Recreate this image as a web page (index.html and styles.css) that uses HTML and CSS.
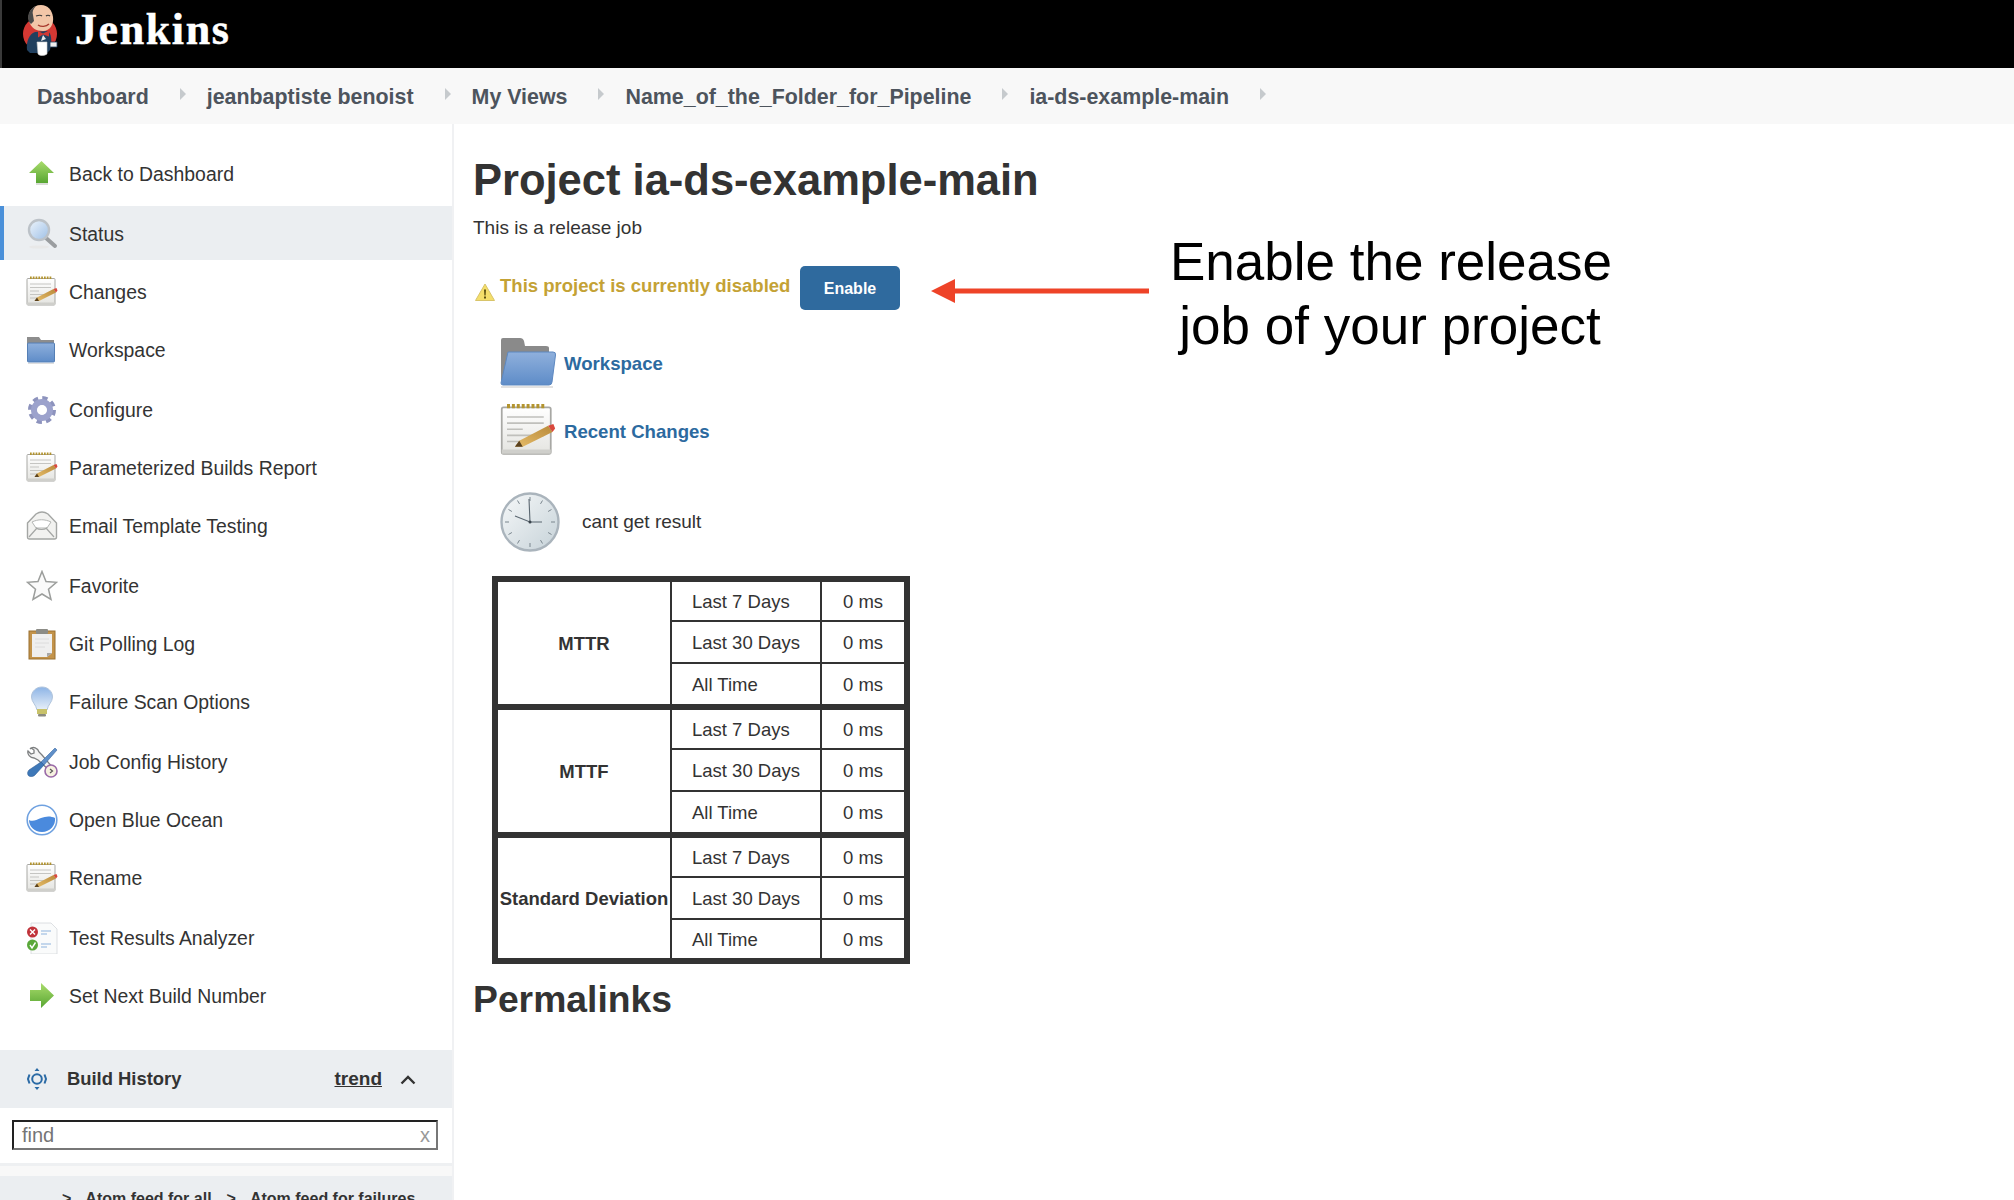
FILE: index.html
```html
<!DOCTYPE html>
<html lang="en">
<head>
  <meta charset="UTF-8" />
  <title>ia-ds-example-main [Jenkins]</title>
  <link rel="stylesheet" href="styles.css">
</head>
<body>
  <svg class="defs" width="0" height="0">
    <defs>
      <linearGradient id="g-green" x1="0" y1="0" x2="0" y2="1"><stop offset="0" stop-color="#a9dc6c"/><stop offset="1" stop-color="#58a632"/></linearGradient>
      <linearGradient id="g-lens" x1="0" y1="0" x2="1" y2="1"><stop offset="0" stop-color="#eef5fc"/><stop offset="1" stop-color="#9dbfe6"/></linearGradient>
      <linearGradient id="g-folder" x1="0" y1="0" x2="0" y2="1"><stop offset="0" stop-color="#8fb0dc"/><stop offset="1" stop-color="#5e8cc8"/></linearGradient>
      <linearGradient id="g-paper" x1="0" y1="0" x2="0" y2="1"><stop offset="0" stop-color="#ffffff"/><stop offset="1" stop-color="#e4e4e0"/></linearGradient>
      <linearGradient id="g-bulb" x1="0" y1="0" x2="0" y2="1"><stop offset="0" stop-color="#8db4e6"/><stop offset="1" stop-color="#e8f0f8"/></linearGradient>
      <linearGradient id="g-clock" x1="0" y1="0" x2="1" y2="1"><stop offset="0" stop-color="#f6f8f9"/><stop offset="1" stop-color="#c6d2d8"/></linearGradient>
      <linearGradient id="g-pencil" x1="0" y1="1" x2="1" y2="0"><stop offset="0" stop-color="#e6bd6a"/><stop offset="1" stop-color="#b98a3a"/></linearGradient>

      <symbol id="ic-up" viewBox="0 0 32 32"><path d="M15.5 3 28 15h-6v10H10V15H3z" fill="url(#g-green)"/><path d="M10 25h12v2H10z" fill="#d9dcd6"/></symbol>
      <symbol id="ic-search" viewBox="0 0 32 32"><path d="M20 20l9 8" stroke="#9a9da0" stroke-width="4" stroke-linecap="round"/><circle cx="13" cy="12" r="10" fill="url(#g-lens)" stroke="#bcc2c8" stroke-width="2.4"/><ellipse cx="13" cy="29" rx="10" ry="1.6" fill="#e8e8e8"/></symbol>
      <symbol id="ic-notepad" viewBox="0 0 32 32">
        <rect x="1" y="2.500" width="28" height="26.500" rx="1" fill="url(#g-paper)" stroke="#a8a8a4"/>
        <path d="M4 1.800h22" stroke="#b3942f" stroke-width="2.400" stroke-dasharray="1.700 1.100"/>
        <path d="M4 8h21M4 11.500h21M4 15h9M4 18.500h21M4 22h8" stroke="#c0c0bc" stroke-width=".9"/>
        <path d="M1 26.500h28v2.500H1z" fill="#cfcfcb"/>
        <path d="M8.500 25 11 21.500 27.500 13 30 16.500 13 25z" fill="url(#g-pencil)"/>
        <path d="M27.500 13 30.500 12 31.500 14.500 30 16.500z" fill="#d9483c"/>
        <path d="M8.500 25 11 21.500 13 25z" fill="#5a4220"/>
      </symbol>
      <symbol id="ic-folder" viewBox="0 0 32 32"><path d="M1 3h12l2 3h13v6H1z" fill="#8d8d8d"/><rect x="1.500" y="9" width="27" height="19" rx="1" fill="url(#g-folder)" stroke="#557fb5"/><path d="M2 29h26v1H2z" fill="#dedede"/></symbol>
      <symbol id="ic-gear" viewBox="0 0 32 32"><circle cx="16" cy="16" r="11.500" fill="none" stroke="#8d93bd" stroke-width="5" stroke-dasharray="5.020 4"/><circle cx="16" cy="16" r="8" fill="none" stroke="#9ca2cc" stroke-width="6"/><circle cx="16" cy="16" r="4.500" fill="#fff"/></symbol>
      <symbol id="ic-mail" viewBox="0 0 32 32"><path d="M1.500 13 10 4q6-4 12 0l8.500 9v14q0 2-2 2h-25q-2 0-2-2z" fill="#f2f2f0" stroke="#a4a6a4" stroke-width="1.400"/><path d="M6 12c6-3 13-3 19 0l-4 6H10z" fill="#fff" stroke="#b4b6b4"/><path d="M3 27l8-9M28 27l-8-9M10 18c3 2 8 2 11 0" stroke="#a4a6a4" stroke-width="1.200" fill="none"/></symbol>
      <symbol id="ic-star" viewBox="0 0 32 32"><path d="M16 1.500 20 11.500l10.500.8-8 6.900 2.500 10.300L16 24l-9 5.500 2.500-10.300-8-6.900L12 11.500z" fill="#fafafa" stroke="#9c9e9c" stroke-width="1.500"/></symbol>
      <symbol id="ic-clip" viewBox="0 0 32 32"><rect x="3" y="3" width="26" height="28" fill="#c3934a" stroke="#9a7030"/><path d="M6 6h20v19l-5 4H6z" fill="#efefef"/><path d="M21 29v-4h5z" fill="#a8a8a8"/><rect x="10" y="1" width="12" height="5" rx="1" fill="#8c8c86"/><path d="M9 11h14M9 15h14M9 19h10" stroke="#dcdcdc"/></symbol>
      <symbol id="ic-bulb" viewBox="0 0 32 32"><path d="M16 1c6 0 10.500 4.500 10.500 10 0 5-4.500 7.500-5.500 13h-10C10 18.500 5.500 16 5.500 11 5.500 5.500 10 1 16 1z" fill="url(#g-bulb)" stroke="#b0c4dc"/><rect x="11" y="23" width="10" height="5" fill="#c8c26a"/><rect x="12" y="28" width="8" height="2.500" rx="1" fill="#8a8a80"/></symbol>
      <symbol id="ic-tools" viewBox="0 0 32 32"><path d="M4 3c3-3 8-1 9 3l3 3 11 13-3 3L12 14 8 12C4 12 1 8 2 5l3 3 3-1 0-3-3-2z" fill="#f4f4f4" stroke="#7d7f80" stroke-width="1.300"/><path d="M29 2 31 4 18 19 15 16z" fill="#5f8fc8" stroke="#3a6aa5" stroke-width=".6"/><path d="M15 16l3 3-9 10c-2 2-6 2-7 0s0-4 1-5z" fill="#3e78b8" stroke="#2d5c96" stroke-width=".6"/><circle cx="25" cy="25" r="6" fill="#f6f1e0" stroke="#9a6aa8" stroke-width="1.600"/><path d="M24 23l2.500 2-2.500 2" fill="none" stroke="#555" stroke-width="1.200"/></symbol>
      <symbol id="ic-ocean" viewBox="0 0 32 32"><circle cx="16" cy="16" r="14.800" fill="#fff" stroke="#6fa1e0" stroke-width="1.600"/><path d="M3 16c4 2 7 0 12-2s10-2 14 0c1 7-5 14-13 14S3 22 3 16z" fill="#4a8add"/></symbol>
      <symbol id="ic-tests" viewBox="0 0 32 32"><path d="M5 1h20l6 6v25H5z" fill="#fafbfb" stroke="#d4d8dc" stroke-width=".8"/><path d="M15 9h10M15 12h6M15 22h10M15 25h6" stroke="#8eb4de" stroke-width="1.200"/><circle cx="6.500" cy="10" r="5.500" fill="#c0333a"/><path d="M4 7.500l5 5M9 7.500l-5 5" stroke="#fff" stroke-width="1.400"/><circle cx="6.500" cy="23" r="5.500" fill="#5aa83a"/><path d="M4 23l2 3 3.500-5.500" stroke="#fff" stroke-width="1.400" fill="none"/></symbol>
      <symbol id="ic-next" viewBox="0 0 32 32"><path d="M4 10h11V3l13 12.500L15 28v-7H4z" fill="url(#g-green)"/></symbol>
    </defs>
  </svg>

  <header class="topbar">
    <svg class="logo" viewBox="22 5 36 51" aria-hidden="true">
      <circle cx="40" cy="34" r="17" fill="#d33833"/>
      <path d="M27 50c-1-8 2-16 8-18l12-1c5 2 5 10 3 19l-3 3H30z" fill="#21405f"/>
      <path d="M29 21c-2-8 3-16 12-16 7 0 11 5 12 12 1 7-3 14-10 14-7 0-12-3-14-10z" fill="#f2c6a8"/>
      <path d="M29 22c-3-8 2-14 7-16-3 3-4 6-3 9l1 6-3 3z" fill="#4b4b4b"/>
      <path d="M36 16c3-1 5-1 6 0M46 16c1-1 3-1 4 0" stroke="#3a3a3a" stroke-width="1.200" fill="none"/>
      <path d="M38 25c3 2 8 2 11-1" stroke="#a83a2e" stroke-width="1.400" fill="none"/>
      <path d="M38 31l5 2.500 6-3v6l-6-2-5 3z" fill="#d33833"/>
      <path d="M43 35l-2 6 5-2z" fill="#e8e8e8"/>
      <path d="M37 42h10v12c-3 2-7 2-9 0z" fill="#fff" stroke="#cfcfcf" stroke-width=".6"/>
      <path d="M50 42h7v5h-7z" fill="#eee" stroke="#21405f" stroke-width=".8"/>
    </svg>
    <span class="wordmark">Jenkins</span>
  </header>

  <nav class="breadcrumbs">
    <a href="#">Dashboard</a><i class="sep"></i>
    <a href="#">jeanbaptiste benoist</a><i class="sep"></i>
    <a href="#">My Views</a><i class="sep"></i>
    <a href="#">Name_of_the_Folder_for_Pipeline</a><i class="sep"></i>
    <a href="#">ia-ds-example-main</a><i class="sep"></i>
  </nav>

  <div class="layout">
    <aside class="sidebar">
      <ul class="tasks">
        <li><svg class="task-icon"><use href="#ic-up"/></svg>Back to Dashboard</li>
        <li class="active"><svg class="task-icon"><use href="#ic-search"/></svg>Status</li>
        <li><svg class="task-icon"><use href="#ic-notepad"/></svg>Changes</li>
        <li><svg class="task-icon"><use href="#ic-folder"/></svg>Workspace</li>
        <li><svg class="task-icon"><use href="#ic-gear"/></svg>Configure</li>
        <li><svg class="task-icon"><use href="#ic-notepad"/></svg>Parameterized Builds Report</li>
        <li><svg class="task-icon"><use href="#ic-mail"/></svg>Email Template Testing</li>
        <li><svg class="task-icon"><use href="#ic-star"/></svg>Favorite</li>
        <li><svg class="task-icon"><use href="#ic-clip"/></svg>Git Polling Log</li>
        <li><svg class="task-icon"><use href="#ic-bulb"/></svg>Failure Scan Options</li>
        <li><svg class="task-icon"><use href="#ic-tools"/></svg>Job Config History</li>
        <li><svg class="task-icon"><use href="#ic-ocean"/></svg>Open Blue Ocean</li>
        <li><svg class="task-icon"><use href="#ic-notepad"/></svg>Rename</li>
        <li><svg class="task-icon"><use href="#ic-tests"/></svg>Test Results Analyzer</li>
        <li><svg class="task-icon"><use href="#ic-next"/></svg>Set Next Build Number</li>
      </ul>

      <div class="history-head">
        <svg class="history-icon" viewBox="0 0 20 24">
          <circle cx="10" cy="12" r="4.800" fill="none" stroke="#2a6aa5" stroke-width="2"/>
          <path d="M10 1l2.500 3h-5zM10 23l2.500-3h-5z" fill="#2a6aa5"/>
          <path d="M2.500 7.500 1 12l1.500 4.500M17.500 7.500 19 12l-1.500 4.500" fill="none" stroke="#2a6aa5" stroke-width="2"/>
        </svg>
        <span class="history-title">Build History</span>
        <a class="trend" href="#">trend</a>
        <svg class="collapse" viewBox="0 0 16 10"><path d="M1.500 8.500 8 2l6.500 6.500" fill="none" stroke="#333" stroke-width="2.400"/></svg>
      </div>
      <div class="history-search">
        <div class="find-box"><span>find</span><span class="clear">x</span></div>
      </div>
      <div class="history-strip"></div>
      <div class="feeds">
        <span class="feed-arrow">&gt;</span><a href="#">Atom feed for all</a>
        <span class="feed-arrow">&gt;</span><a href="#">Atom feed for failures</a>
      </div>
    </aside>

    <main class="content">
      <h1>Project ia-ds-example-main</h1>
      <p class="description">This is a release job</p>

      <form class="disabled-row">
        <svg class="warn-icon" viewBox="0 0 20 18"><path d="M10 1 19.500 17.500H.5z" fill="#f4de6a" stroke="#d8c46a"/><path d="M9 6.500h2l-.4 6h-1.200zM9 13.500h2v2H9z" fill="#5a4e10"/></svg>
        <span class="warn-text">This project is currently disabled</span>
        <button class="btn-enable" type="button">Enable</button>
      </form>

      <div class="link-row">
        <svg class="big-icon" viewBox="0 0 56 50">
          <path d="M1 2q0-2 2-2h17q3 0 4 3l1 5h21q3 0 3 2v32H1z" fill="#8a8a8a"/>
          <path d="M8 14h45q3 0 2.500 3L52 44q-.3 3-3 3H3q-2 0-2-2z" fill="url(#g-folder)" stroke="#5d88c0"/>
          <path d="M1 48h52v2H1z" fill="#e2e2e2"/>
        </svg>
        <a href="#">Workspace</a>
      </div>
      <div class="link-row">
        <svg class="big-icon"><use href="#ic-notepad"/></svg>
        <a href="#">Recent Changes</a>
      </div>

      <div class="clock-row">
        <svg class="clock-icon" viewBox="0 0 60 60">
          <circle cx="30" cy="30" r="28.500" fill="url(#g-clock)" stroke="#aab4bc" stroke-width="2.400"/>
          <path d="M30 5v4M30 51v4M5 30h4M51 30h4M17.500 8.500l2 3.400M42.500 8.500l-2 3.400M8.500 17.500l3.400 2M51.500 17.500l-3.400 2M8.500 42.500l3.400-2M51.500 42.500l-3.400-2M17.500 51.500l2-3.400M42.500 51.500l-2-3.400" stroke="#7a868e" stroke-width="1"/>
          <path d="M29 7l1 23-15-6M30 30h12" fill="none" stroke="#5a6670" stroke-width="1.100"/>
          <circle cx="30" cy="30" r="1.500" fill="#3a444c"/>
        </svg>
        <span>cant get result</span>
      </div>

      <table class="metrics">
        <tbody>
          <tr><th rowspan="3">MTTR</th><td>Last 7 Days</td><td class="value">0 ms</td></tr>
          <tr><td>Last 30 Days</td><td class="value">0 ms</td></tr>
          <tr><td>All Time</td><td class="value">0 ms</td></tr>
        </tbody>
        <tbody>
          <tr><th rowspan="3">MTTF</th><td>Last 7 Days</td><td class="value">0 ms</td></tr>
          <tr><td>Last 30 Days</td><td class="value">0 ms</td></tr>
          <tr><td>All Time</td><td class="value">0 ms</td></tr>
        </tbody>
        <tbody>
          <tr><th rowspan="3">Standard Deviation</th><td>Last 7 Days</td><td class="value">0 ms</td></tr>
          <tr><td>Last 30 Days</td><td class="value">0 ms</td></tr>
          <tr><td>All Time</td><td class="value">0 ms</td></tr>
        </tbody>
      </table>

      <h2>Permalinks</h2>

      <svg class="callout-arrow" viewBox="0 0 218 26"><path d="M0 13 24 1v9.500h194v5H24V25z" fill="#ee4328"/></svg>
      <div class="callout">Enable the release<br>job of your project</div>
    </main>
  </div>
</body>
</html>
```

FILE: styles.css
```css
* {
  box-sizing: border-box;
}

html, body {
  height: 1200px;
  overflow: hidden;
}

body {
  margin: 0;
  font-family: "Liberation Sans", Arial, sans-serif;
  font-size: 19px;
  color: #333;
  background: #fff;
}

a {
  color: inherit;
  text-decoration: none;
}

.defs {
  position: absolute;
}

/* top bar */
.topbar {
  display: flex;
  align-items: center;
  height: 68px;
  padding-left: 20px;
  background: #000;
  border-left: 2px solid #3a3a3a;
}

.logo {
  width: 36px;
  height: 51px;
  margin-bottom: 7px;
}

.wordmark {
  margin: 0 0 9px 17px;
  font-family: "Liberation Serif", serif;
  font-size: 44px;
  font-weight: bold;
  letter-spacing: 1.600px;
  color: #fff;
  -webkit-text-stroke: 0.5px #fff;
}

.breadcrumbs {
  display: flex;
  align-items: center;
  height: 56px;
  padding: 2px 0 0 37px;
  background: #f8f8f8;
  font-size: 21.400px;
  font-weight: bold;
  color: #4d545d;
}

.sep {
  width: 0;
  height: 0;
  margin: 0 21px 6px 31px;
  border-left: 6px solid #c6cacd;
  border-top: 6px solid transparent;
  border-bottom: 6px solid transparent;
}

.layout {
  display: flex;
  height: 1076px;
}

/* side panel */
.sidebar {
  flex: none;
  width: 454px;
  border-right: 2px solid #f0f1f3;
  padding-top: 22px;
}

.tasks {
  list-style: none;
  margin: 0 0 28px;
  padding: 0;
  font-size: 19.400px;
}

.tasks li {
  display: flex;
  align-items: center;
  height: 54px;
  margin-bottom: 4px;
  padding: 2px 0 0 26px;
}

.tasks li:nth-child(3n+1) {
  margin-bottom: 6px;
}

.tasks li:last-child {
  margin-bottom: 0;
}

.tasks li.active {
  padding-left: 22px;
  background: #ebeef1;
  border-left: 4px solid #4a90d9;
}

.task-icon {
  flex: none;
  width: 32px;
  height: 32px;
  margin-right: 11px;
}

.history-head {
  display: flex;
  align-items: center;
  height: 58px;
  padding-left: 27px;
  background: #ebeef1;
}

.history-icon {
  width: 20px;
  height: 24px;
  margin-right: 20px;
}

.history-title {
  flex: 1;
  font-size: 18.400px;
  font-weight: bold;
}

.trend {
  font-weight: bold;
  text-decoration: underline;
}

.collapse {
  width: 16px;
  height: 10px;
  margin: 2px 36px 0 18px;
}

.history-search {
  height: 55px;
  padding: 12px 14px 12px 12px;
}

.find-box {
  display: flex;
  justify-content: space-between;
  align-items: center;
  height: 30px;
  padding: 0 6px 0 8px;
  border: 2px solid;
  border-color: #222 #777 #777 #222;
  font-size: 20px;
  color: #757575;
}

.clear {
  color: #999;
}

.history-strip {
  height: 13px;
  background: #f8f8f8;
  border-top: 3px solid #eef0f2;
}

.feeds {
  display: flex;
  height: 40px;
  padding: 14px 0 0 62px;
  background: #ebeef1;
  font-size: 16px;
  font-weight: bold;
}

.feeds a {
  margin-right: 15px;
}

.feed-arrow {
  margin-right: 14px;
}

/* main area */
.content {
  position: relative;
  flex: 1;
  padding: 31px 0 0 19px;
}

h1 {
  margin: 0 0 11px;
  font-size: 43.500px;
  line-height: 50px;
  font-weight: bold;
}

.description {
  margin: 0 0 26px;
  line-height: 24px;
}

.disabled-row {
  display: flex;
  align-items: center;
  height: 44px;
  margin-bottom: 25px;
  padding-left: 2px;
}

.warn-icon {
  width: 20px;
  height: 18px;
  margin: 8px 5px 0 0;
}

.warn-text {
  width: 300px;
  margin-bottom: 4px;
  font-size: 18.550px;
  font-weight: bold;
  color: #c4a235;
}

.btn-enable {
  width: 100px;
  height: 44px;
  padding-top: 3px;
  border: none;
  border-radius: 5px;
  background: #2f6a9e;
  color: #fff;
  font-family: inherit;
  font-size: 16px;
  font-weight: bold;
}

.link-row {
  display: flex;
  align-items: center;
  height: 56px;
  margin-bottom: 12px;
  padding-left: 27px;
  font-size: 18.600px;
  font-weight: bold;
  color: #2c6a9f;
}

.link-row a {
  padding-top: 2px;
}

.big-icon {
  flex: none;
  width: 56px;
  height: 56px;
  margin-right: 8px;
}

.clock-row {
  display: flex;
  align-items: center;
  height: 60px;
  margin: 33px 0 24px;
  padding-left: 27px;
}

.clock-icon {
  width: 60px;
  height: 60px;
  margin-right: 22px;
}

.metrics {
  margin-left: 19px;
  border-collapse: collapse;
  table-layout: fixed;
  width: 412px;
  border: 6px solid #333;
  font-size: 18.500px;
}

.metrics tbody {
  border: 6px solid #333;
}

.metrics th, .metrics td {
  height: 42px;
  padding: 2px 0 0;
  border: 2px solid #333;
}

.metrics tbody:not(:last-child) tr:last-child td {
  height: 44px;
}

.metrics th {
  width: 176px;
  white-space: nowrap;
}

.metrics td {
  width: 150px;
  padding-left: 20px;
}

.metrics td.value {
  width: 86px;
  padding-left: 0;
  text-align: center;
}

h2 {
  margin: 13px 0 0;
  font-size: 37.300px;
  line-height: 44px;
  font-weight: bold;
}

/* annotation laid over the page */
.callout-arrow {
  position: absolute;
  left: 477px;
  top: 154px;
  width: 218px;
  height: 26px;
}

.callout {
  position: absolute;
  left: 716px;
  top: 106px;
  width: 440px;
  font-size: 53px;
  line-height: 64px;
  text-align: center;
  white-space: nowrap;
  color: #000;
}
```
